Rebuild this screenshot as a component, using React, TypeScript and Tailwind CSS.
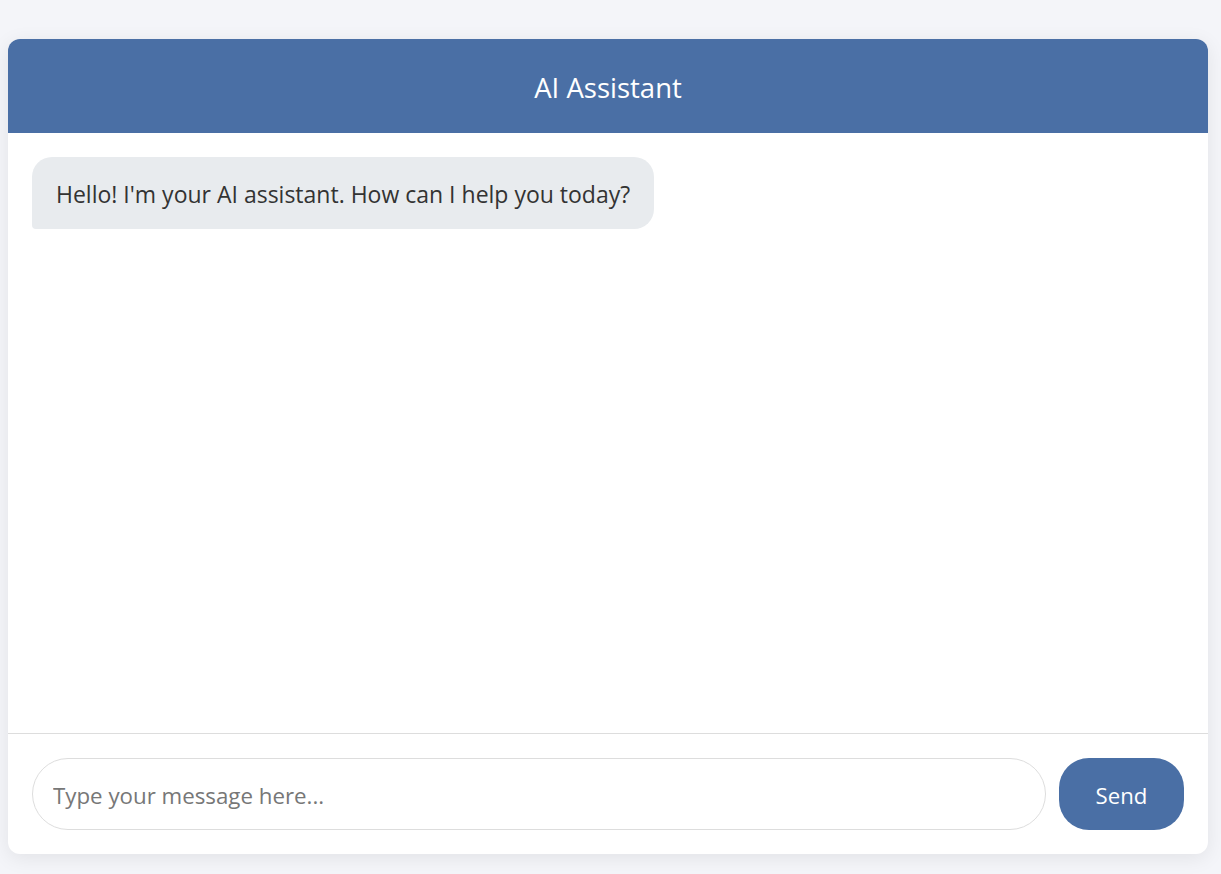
import { useState } from "react";

export default function App() {
  const [draft, setDraft] = useState("");

  return (
    <div className="min-h-screen bg-[#f4f5f9] pt-[39px] pl-2 pr-[13px] pb-5 font-['Open_Sans','Noto_Sans',sans-serif]">
      <div className="flex h-[815px] w-[1200px] flex-col overflow-hidden rounded-xl bg-white shadow-[0_4px_20px_rgba(0,0,0,0.08)]">
        {/* header */}
        <div className="flex h-[94px] shrink-0 items-center justify-center bg-[#4a6fa5] pt-1">
          <h1 className="text-[27.5px] font-normal text-white">AI Assistant</h1>
        </div>

        {/* messages */}
        <div className="flex flex-1 flex-col items-start px-6 py-6">
          <div className="rounded-[20px] rounded-bl-[4px] bg-[#e8ebee] px-6 pt-[21px] pb-[19px] text-[23px] leading-[32px] text-[#333]">
            Hello! I'm your AI assistant. How can I help you today?
          </div>
        </div>

        {/* composer */}
        <div className="flex shrink-0 items-center gap-[13px] border-t border-[#ddd] px-6 pt-6 pb-6">
          <input
            value={draft}
            onChange={(e) => setDraft(e.target.value)}
            placeholder="Type your message here..."
            className="h-[72px] flex-1 rounded-full border border-[#ddd] px-5 pt-[2px] text-[22.3px] text-[#333] outline-none placeholder:text-[#777]"
          />
          <button
            type="button"
            className="h-[72px] w-[125px] rounded-[30px] bg-[#4a6fa5] pt-[3px] text-[22.2px] text-white"
          >
            Send
          </button>
        </div>
      </div>
    </div>
  );
}
